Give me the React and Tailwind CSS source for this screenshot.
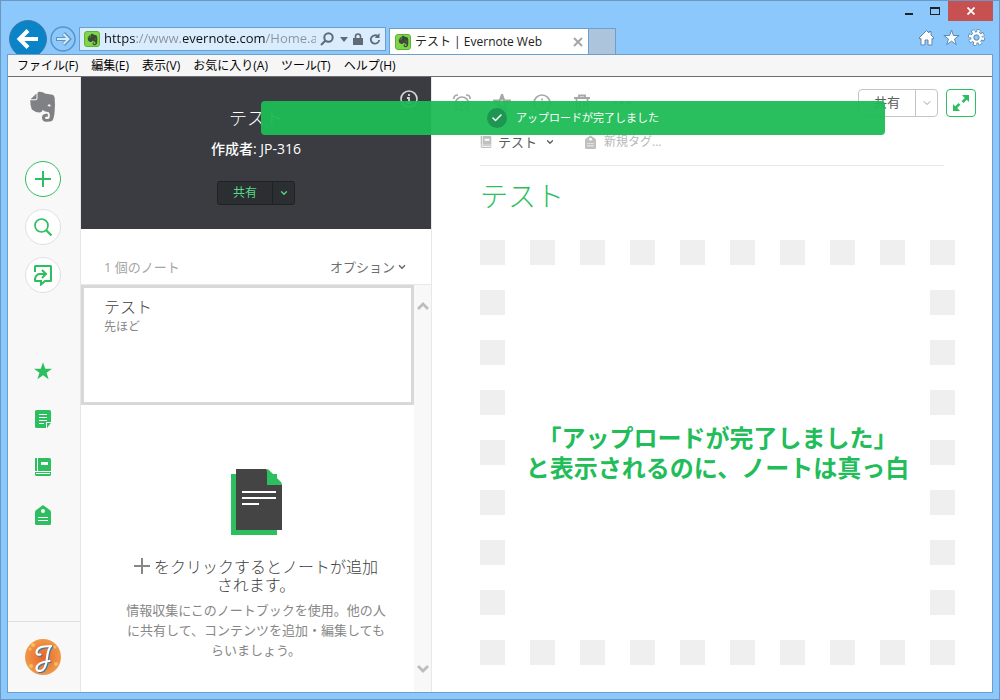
import React, { useState } from 'react';
import { FaEvernote } from 'react-icons/fa6';
import { Check, ChevronDown } from 'lucide-react';

const menus = ['ファイル(F)', '編集(E)', '表示(V)', 'お気に入り(A)', 'ツール(T)', 'ヘルプ(H)'];

const STAR = 'M12 1.5l2.7 7.7h8.1l-6.5 4.9 2.4 7.9-6.7-4.8L5.3 22l2.4-7.9-6.5-4.9h8.1z';

const Favicon = () => (
    <span className="flex size-4 shrink-0 items-center justify-center rounded-[3px] border border-[#5cb531] bg-[#7fd64a] text-[#3c4a38]">
        <FaEvernote size={13} />
    </span>
);

const NotebookIcon = ({ className }) => (
    <svg viewBox="0 0 16 18" className={className} fill="currentColor">
        <path d="M0 0h2v13H0zM3 0h11.500Q16 0 16 1.500V13H3zM0 14h16v2.500q0 1.500-1.500 1.500H1.500Q0 18 0 16.500z" />
        <path d="M6 4h7v3H6zM1 15h14v1H1z" fill="#fff" />
    </svg>
);

const TagIcon = ({ className }) => (
    <svg viewBox="0 0 16 20" className={className} fill="currentColor">
        <path d="M8 0l7 5.200q1 .8 1 2V18.500Q16 20 14.500 20h-13Q0 20 0 18.500V7.200q0-1.200 1-2z" />
        <circle cx="8" cy="6" r="2" fill="#fff" />
        <path d="M3 12h10v1H3zM3 15h10v1H3z" fill="#fff" />
    </svg>
);

const BrowserHeader = () => {
    const [url, setUrl] = useState('https://www.evernote.com/Home.a');

    return (
        <header className="flex h-[53px] shrink-0 justify-between overflow-hidden">
            <div className="flex items-end">
                <button aria-label="戻る" className="ml-[2px] -mb-1">
                    <svg width="38" height="38" viewBox="0 0 38 38">
                        <circle cx="19" cy="19" r="18.500" fill="#0a84c6" stroke="#3f7ba8" />
                        <path d="M29 19H11M19 10.500L10.500 19l8.500 8.500" fill="none" stroke="#fff" strokeWidth="4" />
                    </svg>
                </button>
                <button aria-label="進む" className="mb-[2px] ml-[3px]">
                    <svg width="26" height="26" viewBox="0 0 26 26" fill="none">
                        <circle cx="13" cy="13" r="12" stroke="#5b92c2" strokeWidth="1.500" />
                        <path d="M6 13h12M13.500 7.500L19 13l-5.500 5.500" stroke="#5b92c2" strokeWidth="4" />
                        <path d="M7 13h11M13.500 8L18.500 13l-5 5" stroke="#d5ebfd" strokeWidth="2" />
                    </svg>
                </button>
                <div className="mb-[3px] ml-[3px] flex h-6 w-[307px] items-center border border-[#6d9fcb] bg-[#d9edfe] px-1">
                    <Favicon />
                    <input
                        aria-label="アドレス"
                        value={url}
                        onChange={(e) => setUrl(e.target.value)}
                        className="ml-1 w-[212px] bg-[linear-gradient(to_right,#111_32px,#8a939b_32px,#8a939b_79px,#111_79px,#111_161px,#8a939b_161px)] bg-clip-text font-['Open_Sans','Noto_Sans',sans-serif] text-[13px] text-transparent outline-none"
                    />
                    <div className="flex flex-1 items-center justify-between pl-1 text-[#5f6a74]">
                        <button aria-label="検索">
                            <svg width="14" height="14" viewBox="0 0 14 14" fill="none" stroke="currentColor" strokeWidth="2">
                                <circle cx="8.500" cy="5.500" r="4.200" />
                                <path d="M5.500 8.500L1 13" />
                            </svg>
                        </button>
                        <button aria-label="履歴">
                            <svg width="8" height="5" viewBox="0 0 8 5" fill="currentColor"><path d="M0 0h8L4 5z" /></svg>
                        </button>
                        <svg width="10" height="12" viewBox="0 0 10 12">
                            <path d="M2.500 6V3.500a2.500 2.500 0 015 0V6" fill="none" stroke="currentColor" strokeWidth="1.600" />
                            <path d="M0 5h10v7H0z" fill="currentColor" />
                        </svg>
                        <button aria-label="更新">
                            <svg width="12" height="12" viewBox="0 0 12 12">
                                <path d="M9 3.500A4.200 4.200 0 1010.200 7" fill="none" stroke="currentColor" strokeWidth="1.800" />
                                <path d="M10.500 0v5H5.800z" fill="currentColor" />
                            </svg>
                        </button>
                    </div>
                </div>
                <div className="ml-[3px] flex h-[26px] w-[200px] items-center border border-b-0 border-[#6d9fcb] bg-white px-[5px]">
                    <Favicon />
                    <span className="ml-1 flex-1 truncate font-['Open_Sans','Noto_Sans_CJK_JP',sans-serif] text-xs text-[#222]">
                        テスト | Evernote Web
                    </span>
                    <button aria-label="タブを閉じる">
                        <svg width="10" height="10" viewBox="0 0 10 10" stroke="#a6a6a6" strokeWidth="2"><path d="M1 1l8 8M9 1L1 9" /></svg>
                    </button>
                </div>
                <button aria-label="新しいタブ" className="h-[26px] w-[27px] border border-b-0 border-l-0 border-[#6d9fcb] bg-[#adc5dc]" />
            </div>

            <div className="flex flex-col items-end">
                <div className="flex h-5 items-center">
                    <button aria-label="最小化" className="flex h-5 w-[26px] items-center justify-center">
                        <svg width="8" height="10" viewBox="0 0 8 10"><path d="M0 7h8v2H0z" fill="#222" /></svg>
                    </button>
                    <button aria-label="最大化" className="flex h-5 w-[26px] items-center justify-center">
                        <svg width="10" height="8" viewBox="0 0 10 8"><path d="M0 0h10v8H0zM1 2v5h8V2z" fill="#222" fillRule="evenodd" /></svg>
                    </button>
                    <button aria-label="閉じる" className="flex h-5 w-[45px] items-center justify-center bg-[#c75050]">
                        <svg width="8" height="8" viewBox="0 0 8 8" stroke="#fff" strokeWidth="1.800"><path d="M.5.5l7 7M7.500.5l-7 7" /></svg>
                    </button>
                </div>
                <div className="mt-2 flex items-center gap-2 pr-2">
                    <button aria-label="ホーム">
                        <svg width="17" height="17" viewBox="0 0 17 17" fill="#fff" stroke="#5f87ab">
                            <path d="M8.500 1.500L1 9l1 1.200 1-.7V16h4v-5h3v5h4V9.500l1 .7L16 9l-3-3V2.500h-2V4z" />
                        </svg>
                    </button>
                    <button aria-label="お気に入り">
                        <svg width="17" height="17" viewBox="0 0 24 24" fill="#fff" stroke="#5f87ab" strokeWidth="1.400"><path d={STAR} /></svg>
                    </button>
                    <button aria-label="ツール">
                        <svg width="17" height="17" viewBox="0 0 17 17">
                            <circle cx="8.500" cy="8.500" r="6.700" fill="none" stroke="#5f87ab" strokeWidth="3.600" strokeDasharray="3.300 1.960" />
                            <circle cx="8.500" cy="8.500" r="5.800" fill="#fff" stroke="#5f87ab" />
                            <circle cx="8.500" cy="8.500" r="6.200" fill="none" stroke="#fff" strokeWidth="3" strokeDasharray="2.300 2.569" />
                            <circle cx="8.500" cy="8.500" r="2.700" fill="#8cc8fb" stroke="#5f87ab" />
                        </svg>
                    </button>
                </div>
            </div>
        </header>
    );
};

const Sidebar = () => (
    <aside className="flex w-[73px] shrink-0 flex-col border-r border-[#e6e6e6] bg-[#f8f8f8] text-[#2dbe60]">
        <div className="flex flex-col items-center pr-[2px]">
            <svg width="28" height="32" viewBox="0 0 28 32" className="mt-3.5 text-[#808184]" fill="currentColor">
                <path d="M7.500 2.500V7Q7.500 8.300 6.200 8.300H1.500z" />
                <path d="M10 .8Q14 .6 16 2.500L23.500 3.800Q25.300 4.300 25.700 7Q26.300 14 25.600 21Q25 28 23 30Q21 31 17 30.800Q13 30.500 13 26.500Q13 22.800 17.500 22.800H18.800V25.800H17.200Q16 25.800 16 26.800Q16 28 17.500 28H19Q20.800 28 20.800 25Q20.800 21.300 19 21Q16 20.800 13.600 19Q13 21.600 10.500 21.600Q6 21.300 2.800 18.500Q1.200 14 1.200 9.300H6.500Q8.500 9.300 8.500 7.300V2.500Q8.700 1 10 .8zM18.500 15.300Q20 14.900 21.700 15.500Q21.700 13.300 20.200 13.300Q18.800 13.300 18.500 15.300z" fillRule="evenodd" />
            </svg>
            <div className="mt-[38px] flex flex-col gap-3">
                <button aria-label="新規ノート" className="flex size-9 items-center justify-center rounded-full border border-[#2dbe60] bg-white">
                    <svg width="16" height="16" viewBox="0 0 16 16" stroke="currentColor" strokeWidth="2"><path d="M8 0v16M0 8h16" /></svg>
                </button>
                <button aria-label="検索" className="flex size-9 items-center justify-center rounded-full border border-[#e0e0e0] bg-white">
                    <svg width="18" height="18" viewBox="0 0 18 18" fill="none" stroke="currentColor" strokeWidth="1.700">
                        <circle cx="7.500" cy="7.500" r="6.500" />
                        <path d="M12 12l5.500 5.500" strokeWidth="2.200" />
                    </svg>
                </button>
                <button aria-label="ワークチャット" className="flex size-9 items-center justify-center rounded-full border border-[#e0e0e0] bg-white">
                    <svg width="20" height="22" viewBox="0 0 20 22" fill="none" stroke="currentColor" strokeWidth="2">
                        <path d="M2 8V2.500Q2 2 2.500 2h15q.5 0 .5.500v14q0 .5-.5.500H12l-4 3.500V17H2.500Q2 17 2 16.500v-1.500Q3 10 7 10h5" />
                        <path d="M9 6l4 4-4 4" />
                    </svg>
                </button>
            </div>
            <div className="mt-[66px] flex flex-col items-center gap-6">
                <button aria-label="ショートカット" className="flex size-6 items-center justify-center">
                    <svg width="20" height="20" viewBox="0 0 24 24" fill="currentColor"><path d={STAR} /></svg>
                </button>
                <button aria-label="ノート" className="flex size-6 items-center justify-center">
                    <svg width="16" height="18" viewBox="0 0 16 18" fill="currentColor">
                        <path d="M1.500 0h13Q16 0 16 1.500V12h-5v6H1.500Q0 18 0 16.500v-15Q0 0 1.500 0zM12 13h4l-4 5z" />
                        <path d="M4 4h8v1H4zM4 7h8v1H4zM4 10h8v1H4zM4 13h5v1H4z" fill="#fff" />
                    </svg>
                </button>
                <button aria-label="ノートブック" className="flex size-6 items-center justify-center"><NotebookIcon className="h-[18px] w-4" /></button>
                <button aria-label="タグ" className="flex size-6 items-center justify-center"><TagIcon className="h-5 w-4" /></button>
            </div>
        </div>
        <div className="mt-auto flex h-[71px] items-center justify-center border-t border-[#dedede] pr-[2px]">
            <button aria-label="アカウント" className="size-9 overflow-hidden rounded-full">
                <svg viewBox="0 0 36 36">
                    <defs>
                        <radialGradient id="avatar">
                            <stop offset="0" stopColor="#e86427" />
                            <stop offset="1" stopColor="#f0984a" />
                        </radialGradient>
                    </defs>
                    <path d="M0 0h36v36H0z" fill="url(#avatar)" />
                    <g fill="#f6bd5c">
                        <circle cx="8" cy="6" r="2" /><circle cx="5" cy="10" r="1.500" /><circle cx="30" cy="8" r="1.500" /><circle cx="31" cy="25" r="2" /><circle cx="6" cy="27" r="2" />
                    </g>
                    <g fill="none" strokeLinecap="round" strokeLinejoin="round" strokeWidth="2.200">
                        <path d="M15.500 15.500q-4 .8-4-2.500 1-5 8-5.500l6.500-.5q-3 3-4 12-1 12-6.500 13-4 .3-4-3 1-6 13-7" stroke="#2b7bab" transform="translate(1 1)" />
                        <path d="M15.500 15.500q-4 .8-4-2.500 1-5 8-5.500l6.500-.5q-3 3-4 12-1 12-6.500 13-4 .3-4-3 1-6 13-7" stroke="#fff" />
                    </g>
                </svg>
            </button>
        </div>
    </aside>
);

const NoteList = () => (
    <section className="flex w-[351px] shrink-0 flex-col border-r border-[#e8e8e8]">
        <div className="relative flex h-[152px] flex-col items-center bg-[#3a3c41] pt-[30px] text-white">
            <button aria-label="ノートブック情報" className="absolute top-3 right-[13px]">
                <svg width="18" height="20" viewBox="0 0 18 20" fill="none" stroke="#d6d6d6">
                    <circle cx="9" cy="10" r="8" strokeWidth="1.600" />
                    <path d="M9 5v2M7 9h2v5M7 14h4" strokeWidth="1.800" />
                </svg>
            </button>
            <h2 className="font-['Liberation_Serif','Noto_Sans_CJK_JP',serif] text-[18px] leading-6 font-light">テスト</h2>
            <p className="mt-2 text-sm leading-5 font-medium">作成者: JP-316</p>
            <div className="mt-[22px] flex h-6 rounded-[3px] border border-[#1f2223] bg-[#2b2f31] text-[#57d987]">
                <button className="w-[54px] text-xs leading-5">共有</button>
                <button aria-label="共有メニュー" className="flex w-[22px] items-center justify-center border-l border-[#1f2223]">
                    <ChevronDown size={10} strokeWidth={3} />
                </button>
            </div>
        </div>
        <div className="flex h-14 items-end justify-between border-b border-[#e8e8e8] pr-6 pb-[7px] pl-[23px] text-[13px] leading-5">
            <span className="text-[#a6a6a6]">1 個のノート</span>
            <button className="flex items-center gap-[2px] text-[#6e6e6e]">
                オプション
                <ChevronDown size={10} strokeWidth={4} />
            </button>
        </div>
        <div className="flex flex-1">
            <div className="flex-1">
                <article className="h-[120px] border-3 border-[#d8d8d8] px-5 pt-[9px]">
                    <h3 className="font-['Liberation_Serif','Noto_Sans_CJK_JP',serif] text-base leading-[22px] font-light text-[#404040]">テスト</h3>
                    <p className="text-xs leading-4 text-[#878787]">先ほど</p>
                </article>
                <div className="flex flex-col items-center pt-16 pr-[27px] pl-11 text-center">
                    <svg width="51" height="66" viewBox="0 0 51 66">
                        <path d="M0 5h46v61H0z" fill="#2dbe60" />
                        <path d="M5 0h30l16 16v45H5z" fill="#444" />
                        <path d="M35 0q2 0 3 1l12 12q1 1.500 1 3H36V3q0-2-1-3z" fill="#2dbe60" />
                        <path d="M11 22h34v2H11zM11 28h34v2H11zM11 34h17v2H11z" fill="#fff" />
                    </svg>
                    <p className="mt-[23px] font-['Liberation_Serif','Noto_Sans_CJK_JP',serif] text-base leading-[18px] font-light text-[#404040]">
                        <svg width="16" height="16" viewBox="0 0 16 16" stroke="#878787" strokeWidth="2" className="mr-1 inline align-[-1px]">
                            <path d="M8 0v16M0 8h16" />
                        </svg>
                        をクリックするとノートが追加
                        <br />
                        されます。
                    </p>
                    <p className="mt-[5px] text-[13px] leading-5 text-[#878787]">
                        情報収集にこのノートブックを使用。他の人に共有して、コンテンツを追加・編集してもらいましょう。
                    </p>
                </div>
            </div>
            <div className="flex w-[17px] shrink-0 flex-col items-center justify-between bg-[#f8f8f8] pt-4 pb-[18px]">
                <svg width="12" height="10" viewBox="0 0 12 10" fill="none" stroke="#bdbdbd" strokeWidth="2.800"><path d="M1 8l5-5 5 5" /></svg>
                <svg width="12" height="10" viewBox="0 0 12 10" fill="none" stroke="#bdbdbd" strokeWidth="2.800"><path d="M1 2l5 5 5-5" /></svg>
            </div>
        </div>
    </section>
);

const Square = () => <span className="size-[25px] bg-[#efefef]" />;

const DashedRow = () => (
    <div className="flex justify-between">
        {Array.from({ length: 10 }, (_, i) => <Square key={i} />)}
    </div>
);

const DashedColumn = () => (
    <div className="flex flex-col gap-[25px]">
        {Array.from({ length: 7 }, (_, i) => <Square key={i} />)}
    </div>
);

const Editor = () => (
    <section className="flex min-w-0 flex-1 flex-col">
        <div className="flex items-center justify-between pt-3 pr-4 pl-[21px]">
            <div className="flex gap-[22px] text-[#a8a8a8]">
                <button aria-label="リマインダー">
                    <svg width="18" height="18" viewBox="0 0 18 18" fill="none" stroke="currentColor" strokeWidth="1.700">
                        <circle cx="9" cy="9.500" r="6.500" />
                        <path d="M1 5Q.5 1 5 1M17 5q.5-4-4-4M4 15l-1.500 2.500M14 15l1.500 2.500M6 9.500L8.500 12l4-4" />
                    </svg>
                </button>
                <button aria-label="ショートカットに追加">
                    <svg width="18" height="18" viewBox="0 0 24 24" fill="none" stroke="currentColor" strokeWidth="3.500"><path d={STAR} /></svg>
                </button>
                <button aria-label="ノート情報">
                    <svg width="18" height="18" viewBox="0 0 18 18" fill="none" stroke="currentColor" strokeWidth="1.700">
                        <circle cx="9" cy="9" r="8" />
                        <path d="M9 4.500v2M9 8v5" />
                    </svg>
                </button>
                <button aria-label="削除">
                    <svg width="18" height="18" viewBox="0 0 18 18" fill="none" stroke="currentColor" strokeWidth="1.800">
                        <path d="M1 4h16M6 4V1.500h6V4M3.500 4v13h11V4M7 7v7M11 7v7" />
                    </svg>
                </button>
                <button aria-label="その他">
                    <svg width="18" height="18" viewBox="0 0 18 18" fill="currentColor">
                        <circle cx="2" cy="9" r="2" /><circle cx="9" cy="9" r="2" /><circle cx="16" cy="9" r="2" />
                    </svg>
                </button>
            </div>
            <div className="flex gap-2">
                <div className="flex h-7 rounded border border-[#c4c4c4]">
                    <button className="w-14 text-[13px] text-[#5c5c5c]">共有</button>
                    <button aria-label="共有メニュー" className="flex w-[22px] items-center justify-center border-l border-[#c4c4c4] text-[#a0a0a0]">
                        <ChevronDown size={12} />
                    </button>
                </div>
                <button aria-label="拡大" className="flex h-7 w-[30px] items-center justify-center rounded border border-[#2dbe60] text-[#2dbe60]">
                    <svg width="16" height="16" viewBox="0 0 16 16" fill="currentColor">
                        <path d="M9 0h7v7l-2.200-2.200-3.300 3.300-1.900-1.900 3.200-3.200zM0 9l2.200 2.200 3.300-3.300 1.900 1.900-3.200 3.200L7 16H0z" />
                    </svg>
                </button>
            </div>
        </div>

        <div className="mr-12 ml-12 flex h-[49px] items-center border-b border-[#e8e8e8] pt-[2px] text-[#c0c0c0]">
            <NotebookIcon className="h-3 w-3" />
            <button className="ml-1.5 flex items-center gap-2 text-[13px] leading-5 text-[#5c5c5c]">
                テスト
                <ChevronDown size={10} strokeWidth={3} />
            </button>
            <TagIcon className="ml-[30px] h-[14px] w-[11px]" />
            <input aria-label="新規タグ" placeholder="新規タグ..." className="ml-2 min-w-0 flex-1 text-xs leading-5 outline-none placeholder:text-[#b8b8b8]" />
        </div>

        <h1 className="mt-3 ml-12 font-['Liberation_Serif','Noto_Sans_CJK_JP',serif] text-[28px] leading-10 font-light text-[#2dbe60]">テスト</h1>

        <div className="mt-[22px] mr-[37px] ml-12 flex flex-col gap-[25px]">
            <DashedRow />
            <div className="flex items-center justify-between">
                <DashedColumn />
                <p className="text-center text-2xl leading-[30px] font-bold text-[#21bd58]">
                    「アップロードが完了しました」
                    <br />
                    と表示されるのに、ノートは真っ白
                </p>
                <DashedColumn />
            </div>
            <DashedRow />
        </div>
    </section>
);

const App = () => {
    return (
        <div className="flex min-h-screen flex-col border border-[#6b98c2] bg-[#8cc8fb] px-1.5 pb-1.5 font-['Open_Sans','Noto_Sans_CJK_JP',sans-serif]">
            <BrowserHeader />
            <div className="flex flex-1 flex-col border border-[#6d9fcb] bg-white">
                <nav className="flex h-[22px] shrink-0 items-center gap-[13px] border-b border-[#6e6e6e] bg-[#f6f6f6] px-[9px] text-xs text-black">
                    {menus.map((label) => (
                        <button key={label} className="whitespace-nowrap">{label}</button>
                    ))}
                </nav>
                <main className="relative flex flex-1">
                    <Sidebar />
                    <NoteList />
                    <Editor />

                    {/* Upload toast */}
                    <div role="status" className="absolute top-6 right-[107px] left-[253px] flex h-[34px] items-center justify-center gap-[9px] rounded bg-[#1dbb55]/95 text-[11px] text-white">
                        <span className="flex size-5 items-center justify-center rounded-full bg-[#1d9651]">
                            <Check size={12} strokeWidth={3} />
                        </span>
                        アップロードが完了しました
                    </div>
                </main>
            </div>
        </div>
    );
};

export default App;
